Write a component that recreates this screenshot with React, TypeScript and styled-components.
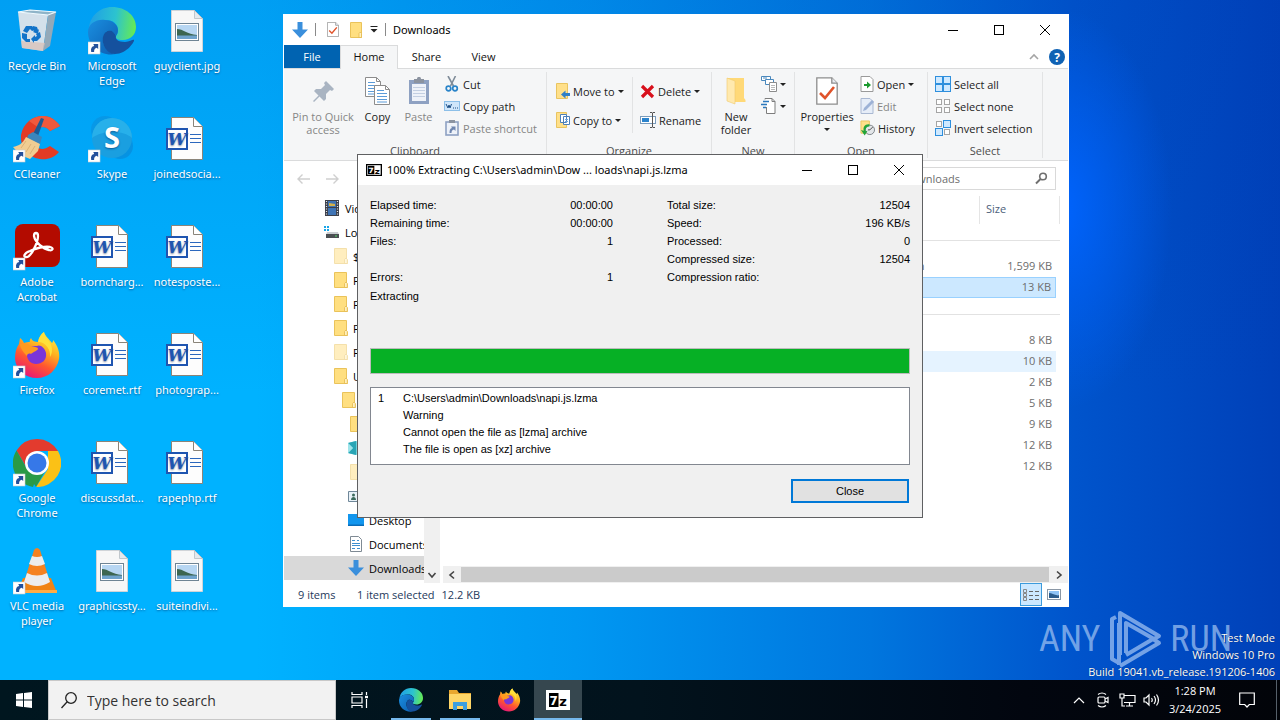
import React from "react";
import styled, { createGlobalStyle, css } from "styled-components";

const ui = `"Open Sans", "Noto Sans", sans-serif`;
const uiWide = `"Noto Sans", "Open Sans", sans-serif`;
const classic = `"Liberation Sans", Arial, sans-serif`;

const Global = createGlobalStyle`
  *, *::before, *::after { box-sizing: border-box; }
  body { margin: 0; font: 11px/15px ${ui}; color: #111; overflow: hidden; }
  button, input { font: inherit; color: inherit; }
  button { border: 0; padding: 0; background: none; }
  ul { list-style: none; margin: 0; padding: 0; }
  svg { display: block; flex: none; }
`;

/* ---------- desktop ---------- */

const Screen = styled.div`
  display: flex;
  flex-direction: column;
  height: 100vh;
  background:
    radial-gradient(ellipse 110px 200px at 83% 29%, rgba(0, 100, 255, 0.95), rgba(0, 90, 240, 0) 100%),
    linear-gradient(180deg, rgba(0, 60, 180, 0.16), rgba(0, 60, 180, 0) 55%),
    linear-gradient(90deg, #00b2ff 0%, #00b2ff 20%, #0098f2 45%, #0076de 68%, #0054cc 84%, #0040b8 100%);
`;
const Desktop = styled.main`
  position: relative;
  flex: 1;
  min-height: 0;
`;
const Shortcuts = styled.ul`
  display: grid;
  grid-auto-flow: column;
  grid-template-rows: repeat(6, 108px);
  grid-auto-columns: 75px;
  width: max-content;
  font-family: ${uiWide};
`;
const Shortcut = styled.button`
  display: flex;
  flex-direction: column;
  align-items: center;
  gap: 3px;
  width: 74px;
  padding-top: 7px;
  color: #fff;
  text-align: center;
  text-shadow: 0 1px 2px rgba(0, 30, 80, 0.55);
`;

/* ---------- windows ---------- */

const Explorer = styled.section`
  position: absolute;
  inset: 14px 211px 73px 283px;
  display: flex;
  flex-direction: column;
  padding: 0 1px;
  background: #fff;
`;
const TitleBar = styled.header<{ $h: number }>`
  display: flex;
  align-items: center;
  flex: none;
  height: ${(p) => p.$h}px;
  padding-left: 8px;
  background: #fff;
`;
const Title = styled.h1`
  flex: 1;
  margin: 0;
  font: 400 11px/16px ${uiWide};
  color: #000;
  white-space: nowrap;
`;
const WinButton = styled.button`
  display: grid;
  place-items: center;
  width: 46px;
  height: 30px;
`;
const QuickBar = styled.div`
  display: flex;
  align-items: center;
  height: 16px;
  margin-right: 7px;
`;
const DialogIcon = styled.span`
  margin-right: 5px;
`;
const QuickButton = styled.button<{ $w: number }>`
  display: grid;
  place-items: center;
  width: ${(p) => p.$w}px;
`;
const QuickRule = styled.span`
  width: 1px;
  height: 13px;
  background: #8a8a8a;
`;
const QuickLead = styled.span`
  padding-right: 7px;
`;

const Tabs = styled.nav`
  display: flex;
  align-items: stretch;
  flex: none;
  height: 24px;
  border-bottom: 1px solid #dadbdc;
`;
const Tab = styled.button<{ $kind?: "file" | "active" }>`
  width: 57px;
  height: 24px;
  padding-bottom: 1px;
  ${(p) => p.$kind === "file" && css`background: #0063b1; color: #fff; height: 23px; width: 56px;`}
  ${(p) => p.$kind === "active" && css`
    width: 58px;
    padding-bottom: 2px;
    background: #f5f6f7;
    border: 1px solid #dadbdc;
    border-bottom: 0;
  `}
`;
const EndTools = styled.div<{ $gap: number }>`
  display: flex;
  align-items: center;
  gap: ${(p) => p.$gap}px;
  margin-left: auto;
  padding-right: 3px;
`;

const Ribbon = styled.div`
  display: flex;
  flex: none;
  height: 92px;
  padding-top: 3px;
  background: #f5f6f7;
  border-bottom: 1px solid #dadbdc;
`;
const Group = styled.section<{ $w: number }>`
  display: flex;
  flex-direction: column;
  width: ${(p) => p.$w}px;
  height: 86px;
  border-right: 1px solid #e2e3e4;
`;
const GroupBody = styled.div`
  display: flex;
  flex: 1;
`;
const GroupName = styled.h2`
  margin: 0;
  font: 400 11px/15px ${ui};
  color: #4c4c4c;
  text-align: center;
`;
const BigButton = styled.button<{ $w: number; $off?: boolean }>`
  display: flex;
  flex-direction: column;
  align-items: center;
  gap: 5px;
  width: ${(p) => p.$w}px;
  padding-top: 5px;
  line-height: 13px;
  color: ${(p) => (p.$off ? "#868686" : "#222")};
`;
const Stack = styled.div<{ $left?: number }>`
  display: flex;
  flex-direction: column;
  padding: 1px 0 0 ${(p) => p.$left ?? 1}px;
`;
const Pair = styled.div<{ $w?: number; $left: number }>`
  display: flex;
  flex-direction: column;
  gap: 7px;
  width: ${(p) => (p.$w ? `${p.$w}px` : "auto")};
  padding: 8px 0 0 ${(p) => p.$left}px;
`;
const SmallButton = styled.button<{ $off?: boolean }>`
  display: flex;
  align-items: center;
  gap: 3px;
  height: 22px;
  white-space: nowrap;
  color: ${(p) => (p.$off ? "#868686" : "#222")};
`;
const InnerRule = styled.span`
  width: 1px;
  height: 56px;
  margin-top: 5px;
  background: #e2e3e4;
`;

const AddressRow = styled.div`
  display: flex;
  align-items: center;
  flex: none;
  height: 35px;
  padding: 0 12px 0 11px;
`;
const NavButton = styled.button`
  display: grid;
  place-items: center;
  width: 16px;
  margin-right: 13px;
`;
const SearchBox = styled.label`
  display: flex;
  align-items: center;
  width: 199px;
  height: 23px;
  margin-left: auto;
  padding: 0 7px;
  border: 1px solid #d9d9d9;
  input {
    flex: 1;
    min-width: 0;
    padding: 0;
    border: 0;
    outline: 0;
    background: none;
  }
  input::placeholder { color: #6d6d6d; opacity: 1; }
`;

const Panes = styled.div`
  display: flex;
  flex: 1;
  min-height: 0;
`;
const Tree = styled.ul`
  width: 140px;
  overflow: hidden;
`;
const TreeRow = styled.li<{ $depth: number; $on?: boolean }>`
  display: flex;
  align-items: center;
  gap: 5px;
  height: 24px;
  padding-left: ${(p) => 32 + p.$depth * 8}px;
  color: #000;
  white-space: nowrap;
  background: ${(p) => (p.$on ? "#d9d9d9" : "none")};
`;
const VScroll = styled.div`
  display: flex;
  align-items: flex-end;
  width: 16px;
  background: #f0f0f0;
`;
const ScrollButton = styled.button`
  display: grid;
  place-items: center;
  width: 16px;
  height: 17px;
`;
const Files = styled.div`
  display: flex;
  flex-direction: column;
  flex: 1;
  min-width: 0;
  padding-left: 3px;
`;
const FileTable = styled.table`
  width: calc(100% - 8px);
  border-collapse: separate;
  border-spacing: 0;
  table-layout: fixed;
  color: #6d6d6d;
  th {
    height: 28px;
    padding: 0 0 3px;
    font-weight: 400;
    text-align: left;
    color: #4c607a;
  }
  th.size { padding-left: 6px; border-left: 1px solid #e5e5e5; }
  th.end { border-right: 1px solid #e5e5e5; }
  td { height: 21px; padding: 0 6px 2px; }
  td.size { padding: 0 4px 2px 0; text-align: right; }
  td.edge { padding: 0; }
  td.group { height: 32px; padding: 0; }
`;
const FileRow = styled.tr<{ $state?: "selected" | "hover" }>`
  ${(p) => p.$state === "selected" && css`
    td:not(.edge) { background: #cce8ff; border: solid #99d1ff; border-width: 1px 0; }
    td.size { border-right: 1px solid #99d1ff; }
  `}
  ${(p) => p.$state === "hover" && css`td:not(.edge) { background: #e5f3ff; }`}
`;
const GroupRule = styled.hr`
  margin: 0;
  border: 0;
  border-top: 1px solid #e2e2e2;
`;
const HScroll = styled.div`
  display: flex;
  height: 17px;
  margin: auto 0 0;
  padding: 0 1px;
  background: #f0f0f0;
`;
const Thumb = styled.span`
  flex: 1;
  height: 15px;
  margin: 1px 2px 0 1px;
  background: #cbcbcb;
`;
const StatusBar = styled.footer`
  display: flex;
  align-items: center;
  flex: none;
  height: 24px;
  padding: 0 4px 1px 14px;
  color: #1e395b;
  white-space: nowrap;
  span { margin-right: 7px; }
  span:first-child { min-width: 52px; }
`;
const ViewButton = styled.button`
  display: grid;
  place-items: center;
  width: 22px;
  height: 23px;
  background: #cce8ff;
  border: 1px solid #3c9bdc;
`;

/* ---------- extraction dialog ---------- */

const Dialog = styled.section`
  position: absolute;
  top: 154px;
  left: 357px;
  right: 357px;
  border: 1px solid #5f6062;
  background: #f0f0f0;
  color: #000;
  font: 11px/18px ${classic};
`;
const DialogBody = styled.div`
  padding: 11px 12px 14px;
`;
const Stats = styled.div`
  display: grid;
  grid-template-columns: 1fr 1fr;
  column-gap: 54px;
`;
const StatList = styled.dl`
  margin: 0;
`;
const Stat = styled.div`
  display: flex;
  justify-content: space-between;
  height: 18px;
  dt, dd { margin: 0; }
`;
const Phase = styled.p`
  margin: 1px 0 43px;
`;
const Progress = styled.div`
  height: 26px;
  border: 1px solid #bcbcbc;
  background: #e6e6e6;
`;
const ProgressFill = styled.div`
  height: 100%;
  background: #06b025;
`;
const Messages = styled.div`
  display: grid;
  grid-template-columns: 25px 1fr;
  align-content: start;
  height: 78px;
  margin: 13px 0 14px;
  padding: 2px 7px;
  border: 1px solid #828790;
  background: #fff;
  line-height: 17px;
  p { margin: 0; }
`;
const CloseButton = styled.button`
  display: block;
  width: 118px;
  height: 24px;
  margin: 0 1px 0 auto;
  border: 2px solid #0078d7;
  background: #e1e1e1;
  line-height: 18px;
`;

/* ---------- watermark ---------- */

const Brand = styled.div`
  position: absolute;
  right: 48px;
  bottom: 11px;
  display: flex;
  align-items: center;
  gap: 8px;
  color: rgba(165, 198, 243, 0.7);
  font: 400 36px/60px "Liberation Sans Narrow", "Roboto Condensed", Roboto, sans-serif;
`;
const BuildInfo = styled.div`
  position: absolute;
  right: 5px;
  bottom: 0;
  color: #fff;
  line-height: 17px;
  text-align: right;
  text-shadow: 0 0 1px rgba(0, 0, 0, 0.6);
`;

/* ---------- taskbar ---------- */

const Taskbar = styled.footer`
  display: flex;
  flex: none;
  height: 40px;
  background: linear-gradient(90deg, #00161f, #02131d 50%, #02060f 80%, #020409);
  color: #fff;
`;
const Pinned = styled.div`
  display: flex;
  gap: 1px;
  margin-left: 3px;
`;
const TaskButton = styled.button<{ $active?: boolean; $open?: boolean }>`
  position: relative;
  display: grid;
  place-items: center;
  width: 48px;
  height: 40px;
  background: ${(p) => (p.$active ? "#36474f" : "none")};
  &::after {
    content: "";
    position: absolute;
    bottom: 0;
    left: ${(p) => (p.$active ? 0 : 4)}px;
    right: ${(p) => (p.$active ? 0 : 4)}px;
    height: 2px;
    background: ${(p) => (p.$active || p.$open ? "#76b9ed" : "none")};
  }
`;
const TaskSearch = styled.label`
  display: flex;
  align-items: center;
  gap: 10px;
  width: 288px;
  padding-left: 12px;
  border: 1px solid #c8c8c8;
  background: #f2f2f2;
  color: #222;
  font-size: 14px;
  input { flex: 1; min-width: 0; height: 20px; padding: 0; border: 0; outline: 0; background: none; }
  input::placeholder { color: #333; opacity: 1; }
`;
const Tray = styled.div`
  display: flex;
  align-items: center;
  margin-left: auto;
`;
const TrayButton = styled.button<{ $w?: number }>`
  display: grid;
  place-items: center;
  width: ${(p) => p.$w ?? 24}px;
  height: 40px;
`;
const Clock = styled.button`
  width: 64px;
  line-height: 18px;
  text-align: center;
`;
const ShowDesktop = styled.button`
  width: 4px;
  height: 40px;
  margin-left: 9px;
  border-left: 1px solid #56606a;
`;

/* ---------- drawings ---------- */

const Badge = () => (
  <g>
    <rect x="0" y="35" width="12" height="12" fill="#fff" stroke="#c9ccd0" strokeWidth=".6" />
    <path d="M3.200 45c-.7-3.600.6-5.600 3-6l-.9-1.900h4.900v5l-1.500-1.400c-1.700.4-2.700 1.600-2.600 4.300z" fill="#24509b" />
  </g>
);
const Big = ({ children, badge }: { children: React.ReactNode; badge?: boolean }) => (
  <svg width="48" height="48" viewBox="0 0 48 48" aria-hidden="true">
    {children}
    {badge && <Badge />}
  </svg>
);

const BinIcon = () => (
  <Big>
    <path d="M5 5l12-2 26 2-8 3z" fill="#8fb4c8" />
    <path d="M5 5l30 3-5 36-21-3z" fill="#d3e0ea" />
    <path d="M35 8l8-3-6 34-7 5z" fill="#93a9b9" />
    <path d="M8 34l24 2-2 8-21-3z" fill="#dcbfb4" opacity=".7" />
    <path d="M5 5l12-2 26 2-8 3z" fill="none" stroke="#f4fafd" strokeWidth="1.200" />
    <g fill="#1273c8">
      <path d="M13 19h6l3 4-3 1-2-2-3 4-4-2z" />
      <path d="M20 19l4 1 1 3 1-1-1 5-5-2 1-1-2-3z" />
      <path d="M23 27l4-2 1 5-4 4h-3v2l-3-4 4-4v2l2-1z" />
      <path d="M9 26l5 1v5h3v3h-4l-4-4z" />
    </g>
  </Big>
);
const EdgeShape = ({ id }: { id: string }) => (
  <>
    <defs>
      <linearGradient id={`${id}a`} x1="0" y1=".4" x2="1" y2=".5">
        <stop offset="0" stopColor="#1f9fe6" /><stop offset=".55" stopColor="#2cc3cf" /><stop offset="1" stopColor="#66eb53" />
      </linearGradient>
      <linearGradient id={`${id}b`} x1="0" y1="0" x2="1" y2="1">
        <stop offset="0" stopColor="#1a8fe0" /><stop offset="1" stopColor="#0c5cb0" />
      </linearGradient>
    </defs>
    <path d="M1 21C2 9 12 0 24 0c14 0 24 9 24 20 0 8-6 13-13 13-6 0-8-2-7-4 1-1 2-3 2-6 0-6-5-10-12-10C9 13 3 16 1 21z" fill={`url(#${id}a)`} />
    <path d="M0 25c0-8 8-13 17-12 8 0 13 5 13 10 0 3-1 4-2 6-2-6-9-8-12-2-4 9 3 19 12 20-15 3-28-8-28-22z" fill={`url(#${id}b)`} />
    <path d="M16 27c3-5 9-5 12 2-1 3 2 6 9 6 5 0 8-3 9-2 1 1-7 14-19 14-9 0-15-12-11-20z" fill="#15519e" />
  </>
);
const CCleanerIcon = () => (
  <Big badge>
    <path d="M47 11L37 16c-3-4-7-5-11-3-6 3-8 10-5 16 3 5 9 7 16 2l9 6c-5 6-12 8-19 7C14 42 7 32 8 20 10 8 20 1 30 1c7 0 13 4 17 10z" fill="#e23b25" />
    <path d="M47 11L37 16c-3-4-7-5-11-3L16 6c5-4 10-5 14-5 7 0 13 4 17 10z" fill="#f0593d" />
    <path d="M28 3l3 1-6 17-5-2z" fill="#1c5a94" />
    <path d="M15 20l5-3 9 5-2 7-13-5z" fill="#3a86bd" />
    <path d="M13 22l14 7-2 7-8 8c-8-3-12-6-17-12 6-1 10-4 13-10z" fill="#f1cd92" />
    <path d="M13 26l-5 7M18 29l-5 8M22 31l-5 8" stroke="#dcb277" fill="none" />
  </Big>
);
const SkypeIcon = () => (
  <Big badge>
    <circle cx="17" cy="15" r="14" fill="#0b8fdc" opacity=".6" />
    <circle cx="32" cy="31" r="13" fill="#0a86d4" opacity=".6" />
    <circle cx="24" cy="23" r="20" fill="#1a9fe0" />
    <path d="M4 23a20 20 0 0 1 40 0c-8-8-30-8-40 0z" fill="#27b0ea" />
    <text x="24" y="33" textAnchor="middle" fontFamily="Open Sans" fontWeight="700" fontSize="29" fill="#fff">S</text>
  </Big>
);
const AcrobatIcon = () => (
  <Big badge>
    <rect x="2" y="1" width="45" height="43" rx="8" fill="#b30b00" />
    <path d="M13 34c-3 0-2-4 4-6 6-3 15-5 20-4 4 1 3 4-1 3-6-1-14-8-15-14 0-4 4-4 4 0 0 6-7 22-12 21z" fill="none" stroke="#fff" strokeWidth="2.300" strokeLinejoin="round" />
  </Big>
);
const FoxShape = ({ id }: { id: string }) => (
  <>
    <defs>
      <linearGradient id={id} x1=".8" y1="0" x2=".3" y2="1">
        <stop offset="0" stopColor="#fff04a" /><stop offset=".35" stopColor="#ffb31f" /><stop offset=".65" stopColor="#ff5630" /><stop offset="1" stopColor="#e6157a" />
      </linearGradient>
    </defs>
    <path d="M31 1c1 4 5 7 8 11 1-1 1-2 1-3 5 6 7 13 6 19-2 11-11 19-22 19C12 47 3 39 2 28c0-6 1-11 4-15l1-6c2 1 3 3 4 5 2-1 4-1 6-1-1-1 0-2 1-4 1 3 4 4 7 4 1-5 3-8 6-10z" fill={`url(#${id})`} />
    <path d="M14 21c1-4 5-6 10-6 3-2 8 2 9 7 1 7-4 11-10 11-5 0-9-4-9-9z" fill="#7a35d8" />
    <path d="M7 13c5-1 9 0 12 3 3 0 6 0 6 2-1 2-5 3-7 5-2-1-4 0-4 2-3-3-7-8-7-12z" fill="#ff9a1f" />
    <path d="M25 11c8 0 13 8 12 15 3-4 3-12-2-17-3-3-4-5-4-8-3 2-5 5-6 10z" fill="#ffe03a" />
  </>
);
const ChromeIcon = () => (
  <Big badge>
    <path d="M24 0a24 24 0 0 1 21 12H24L14 29.500 3.500 11.500A24 24 0 0 1 24 0z" fill="#e33b2e" />
    <path d="M3.500 11.500L14 30l10 6-4 12A24 24 0 0 1 3.500 11.500z" fill="#2a9a47" />
    <path d="M45 12A24 24 0 0 1 23 48l12-18 0-18z" fill="#fbc116" />
    <path d="M23 48L14 34l18-2z" fill="#2a9a47" />
    <circle cx="24" cy="24" r="12" fill="#fff" />
    <circle cx="24" cy="24" r="9.500" fill="#3678e8" />
  </Big>
);
const VlcIcon = () => (
  <Big badge>
    <path d="M10 31h28l6 15H4z" fill="#f08314" />
    <path d="M4 43h40v3H4z" fill="#ffac45" />
    <path d="M21 3q3-4 6 0l10 32q-13 8-26 0z" fill="#f58220" />
    <path d="M19 9q5 2 10 0l3 8q-8 4-16 0z" fill="#ededed" />
    <path d="M14 26q10 5 20 0l3 9q-13 8-26 0z" fill="#ededed" />
  </Big>
);
const WordDocIcon = () => (
  <Big>
    <path d="M8.500 2.500h22l9 9v33h-31z" fill="#fdfdfd" stroke="#8a8479" />
    <path d="M30.500 2.500v9h9" fill="#fff" stroke="#8a8479" />
    <path d="M27 19.500h11M27 23.500h11M27 27.500h11" stroke="#2b67bd" />
    <rect x="3" y="13" width="22" height="22" fill="#1f55b0" />
    <rect x="5" y="15" width="18" height="18" fill="#fff" />
    <text x="14" y="30" textAnchor="middle" fontFamily="DejaVu Serif, serif" fontStyle="italic" fontWeight="700" fontSize="17" fill="#1f55b0">W</text>
  </Big>
);
const PictureDocIcon = () => (
  <Big>
    <path d="M8.500 3.500h23l8 8v33h-31z" fill="#f7f7f7" stroke="#d0d4d8" />
    <path d="M31.500 3.500v8h8z" fill="#e3e9ee" stroke="#b5bcc2" strokeWidth=".8" />
    <rect x="12.500" y="16.500" width="23" height="17" fill="#fff" stroke="#6f8494" />
    <rect x="14" y="18" width="20" height="14" fill="#b7d6f2" />
    <path d="M14 22c6 0 10 5 20 6v1H14z" fill="#3d6650" />
    <path d="M14 28.500h20V32H14z" fill="#6fa3cc" />
  </Big>
);

const DownArrow = () => (
  <svg width="16" height="16" viewBox="0 0 16 16"><path d="M5.500 0h5v7.500H16L8 16 0 7.500h5.500z" fill="#3a8fdc" /></svg>
);
const Caret = () => (
  <svg width="6" height="3" viewBox="0 0 6 3"><path d="M0 0h6L3 3z" fill="#222" /></svg>
);
const FolderIcon = ({ faded, w = 16, h = 16 }: { faded?: boolean; w?: number; h?: number }) => (
  <svg width={w} height={h} viewBox="0 0 16 16" opacity={faded ? 0.5 : 1}>
    <path d="M2.500.5H14.500V11l.8 1v3.500H2.500z" fill="#ffdf80" stroke="#eac35a" />
    <path d="M12.500 15.500v-4l1.500-1.500 1.300 1.500v4z" fill="#fff0bd" stroke="#e5b94b" strokeWidth=".8" />
  </svg>
);
const QuickFolder = () => (
  <svg width="12" height="16" viewBox="0 0 12 16"><path d="M.5.500h11v15H.5z" fill="#ffdf80" stroke="#eac35a" /><path d="M9 15.500v-4l1.300-1.500 1.200 1.500v4z" fill="#fff0bd" stroke="#e5b94b" strokeWidth=".8" /></svg>
);
const CheckDoc = ({ w, h }: { w: number; h: number }) => (
  <svg width={w} height={h} viewBox="0 0 22 28" preserveAspectRatio="none">
    <path d="M.8.800h15l5.400 5.400v21H.8z" fill="#fff" stroke="#8d8d8d" strokeWidth="1.300" />
    <path d="M15.800.8v5.400h5.400" fill="#e9edf2" stroke="#8d8d8d" strokeWidth="1.300" />
    <path d="M4 16l5 5 9-11" fill="none" stroke="#e0532a" strokeWidth="2.600" />
  </svg>
);
const Minimize = () => <svg width="10" height="10"><path d="M0 5.500h10" stroke="#000" /></svg>;
const Maximize = () => <svg width="10" height="10"><rect x=".5" y=".5" width="9" height="9" fill="none" stroke="#000" /></svg>;
const Cross = () => <svg width="10" height="10"><path d="M0 0l10 10M10 0L0 10" stroke="#000" /></svg>;

const PinIcon = () => (
  <svg width="28" height="28" viewBox="0 0 28 28">
    <path d="M17 4l8 8-2 2-2-1-4 4v5l-2 2-4.500-4.500L5 25l-1-1 5.500-5.500L5 14l2-2h5l4-4-1-2z" fill="#a9b4c2" />
  </svg>
);
const Sheet = ({ x, y }: { x: number; y: number }) => (
  <g transform={`translate(${x} ${y})`}>
    <path d="M.5.500h11l4 4v15H.5z" fill="#fff" stroke="#8c8c8c" />
    <path d="M11.500.5v4h4" fill="none" stroke="#8c8c8c" />
    <path d="M3 5.500h7M3 8.500h10M3 11.500h10M3 14.500h10M3 17h10" stroke="#5b9bd8" />
  </g>
);
const CopyBig = () => (
  <svg width="25" height="28" viewBox="0 0 25 28"><Sheet x={0} y={0} /><Sheet x={9} y={8} /></svg>
);
const PasteBig = () => (
  <svg width="22" height="28" viewBox="0 0 22 28">
    <rect x="1" y="3" width="20" height="24" fill="#8ea1c2" />
    <rect x="4" y="7" width="14" height="17" fill="#eef2f9" />
    <path d="M5 10.500h12M5 13.500h12M5 16.500h12M5 19.500h12" stroke="#c3cfe2" />
    <path d="M6 2h3c0-3 4-3 4 0h3v4H6z" fill="#8b93a0" />
  </svg>
);
const CutIcon = () => (
  <svg width="16" height="16" viewBox="0 0 16 16" fill="none">
    <path d="M4 0l5.500 10M11.500 0L6.500 10" stroke="#7f8c99" strokeWidth="1.600" />
    <circle cx="4.500" cy="12.500" r="2.300" stroke="#2a84c9" strokeWidth="1.700" /><circle cx="11" cy="12.500" r="2.300" stroke="#2a84c9" strokeWidth="1.700" />
  </svg>
);
const PathIcon = () => (
  <svg width="16" height="16" viewBox="0 0 16 16">
    <rect x=".5" y="3.500" width="15" height="9" fill="#cfe6fa" stroke="#8cbfe8" />
    <path d="M2 6l2 4 1-3 1 3 1.500-4M9 10h1M11 10h1M13 10h1" fill="none" stroke="#1d4f86" />
  </svg>
);
const PasteLinkIcon = () => (
  <svg width="16" height="16" viewBox="0 0 16 16">
    <rect x="2" y="2" width="12" height="13" fill="#eef2f9" stroke="#8ea1c2" strokeWidth="1.600" />
    <path d="M5 0h6v3H5z" fill="#8b93a0" />
    <path d="M5.500 13c0-3 .5-4.500 2.500-5L7 6.500h4.500V11L10 9.500c-2 .5-2.500 1.500-2.500 3.500z" fill="#6f86b0" />
  </svg>
);
const MoveIcon = () => (
  <svg width="14" height="16" viewBox="0 0 14 16">
    <path d="M.5.500h11v15H.5z" fill="#ffe08a" stroke="#e9c460" />
    <path d="M14 10v3H9.500v2.500L5 11.500l4.500-4V10z" fill="#2f7fc8" />
  </svg>
);
const CopyToIcon = () => (
  <svg width="14" height="16" viewBox="0 0 14 16">
    <path d="M.5.500h10v15H.5z" fill="#ffe08a" stroke="#e9c460" />
    <path d="M4.500 2.500h6v8h-6zM7.500 4.500h6v8h-6z" fill="#fff" stroke="#4d7fb8" />
    <path d="M9 7.500h3M9 9.500h3" stroke="#6ba3dc" />
  </svg>
);
const DeleteIcon = () => (
  <svg width="15" height="15" viewBox="0 0 15 15"><path d="M2 2l11 11M13 2L2 13" stroke="#d8101c" strokeWidth="3.200" /></svg>
);
const RenameIcon = () => (
  <svg width="16" height="16" viewBox="0 0 16 16" fill="none">
    <rect x=".5" y="4.500" width="15" height="7" fill="#fff" stroke="#7a9cbc" /><path d="M2 6h7v4H2z" fill="#2b83cc" />
    <path d="M10 .5h2l.5.500.5-.500h2M12.500 1v14M10 15.500h2l.5-.500.5.500h2" stroke="#555" />
  </svg>
);
const NewFolderBig = () => (
  <svg width="20" height="28" viewBox="0 0 20 28">
    <path d="M1 1h17v20l1.500 2v2H8z" fill="#ffd978" />
    <path d="M1 1l8 3v23l-8-3z" fill="#ffe9ae" stroke="#f0cb6c" strokeWidth=".6" />
  </svg>
);
const NewItemIcon = () => (
  <svg width="16" height="16" viewBox="0 0 16 16" fill="#fff">
    <path d="M.5.500h9v4h-9z" stroke="#4a88bd" /><path d="M2 2h4" stroke="#4a88bd" /><path d="M4.500 3.500h8v5h-8z" stroke="#4a88bd" />
    <path d="M8.500 6.500h7v9h-7z" stroke="#8c8c8c" /><path d="M10 9.500h4M10 11.500h4M10 13.500h4" stroke="#b9b9b9" />
  </svg>
);
const EasyAccessIcon = () => (
  <svg width="16" height="16" viewBox="0 0 16 16" fill="none">
    <path d="M4 1.500V.5h7l3 3v12H5.500V9" fill="#fff" stroke="#7d7d7d" /><path d="M11 .5v3h3" stroke="#7d7d7d" />
    <path d="M2 3.500h6M0 6.500h6M2 9.500h3" stroke="#2b78bd" strokeWidth="1.300" />
  </svg>
);
const OpenDocIcon = () => (
  <svg width="14" height="16" viewBox="0 0 14 16">
    <path d="M1 .500h9l3 3v12H1z" fill="#fff" stroke="#9a9a9a" /><path d="M4 8h3V5.500L11 9l-4 3.500V10H4z" fill="#1c9a2f" />
  </svg>
);
const EditDocIcon = () => (
  <svg width="14" height="16" viewBox="0 0 14 16">
    <path d="M1 .500h9l3 3v12H1z" fill="#e6edf8" stroke="#a9b8d2" /><path d="M3 13l1-3 8-8 2 2-8 8z" fill="#9db2d6" />
  </svg>
);
const HistoryIcon = () => (
  <svg width="15" height="16" viewBox="0 0 16 16">
    <path d="M1 .500h9v13H1z" fill="#ffe08a" stroke="#e9c460" />
    <circle cx="10.500" cy="10" r="5" fill="#e3e6e9" stroke="#7b8186" /><path d="M10.500 10l3-3M10.500 10h-2" stroke="#444" />
    <path d="M10 4c-5-.5-7 3-6 7l-3-1 4 6 3-5-2 .5c-.5-3 1-5 4-5z" fill="#23a53a" />
  </svg>
);
const Tiles = ({ on }: { on: number[] }) => (
  <svg width="16" height="16" viewBox="0 0 16 16">
    {[0, 1, 2, 3].map((i) => {
      const hit = on.includes(i);
      return (
        <rect key={i} x={(i % 2) * 8 + (hit ? 0.5 : 1.5)} y={(i >> 1) * 8 + (hit ? 0.5 : 1.5)} width={hit ? 7 : 5} height={hit ? 7 : 5}
          fill={hit ? "#cfe9ff" : "#fff"} stroke={hit ? "#2e8fdd" : "#a5a5a5"} />
      );
    })}
  </svg>
);
const Chevron = ({ d, color = "#444", w = 1.6 }: { d: string; color?: string; w?: number }) => (
  <svg width="10" height="10" viewBox="0 0 10 10"><path d={d} fill="none" stroke={color} strokeWidth={w} /></svg>
);
const ArrowIcon = ({ flip }: { flip?: boolean }) => (
  <svg width="13" height="12" viewBox="0 0 13 12">
    <path d={flip ? "M0 6h12M7.500 1.500L12 6l-4.500 4.500" : "M13 6H1M5.500 1.500L1 6l4.500 4.500"} fill="none" stroke="#cfcfcf" strokeWidth="1.400" />
  </svg>
);
const Loupe = () => (
  <svg width="13" height="13" viewBox="0 0 13 13" fill="none" stroke="#6f6f6f">
    <circle cx="8" cy="4.500" r="3.300" strokeWidth="1.600" /><path d="M5.500 7L1 11.500" strokeWidth="2" />
  </svg>
);
const FilmIcon = () => (
  <svg width="16" height="16" viewBox="0 0 16 16">
    <path d="M1 0h14v16H1z" fill="#3b3f4a" /><path d="M4 1h8v6H4zM4 8h8v7H4z" fill="#3f74b5" /><path d="M5 3l6 1v2H5z" fill="#d5b14a" />
    <path d="M2.500 1v15M13.500 1v15" stroke="#e8e8e8" strokeWidth="1.200" strokeDasharray="1 1.500" />
  </svg>
);
const DriveIcon = () => (
  <svg width="16" height="16" viewBox="0 0 16 16">
    <path d="M0 2h2v2H0zM3 2h2v2H3zM0 5h2v2H0zM3 5h2v2H3z" fill="#18a5e8" />
    <path d="M3 8h11l1 3H2z" fill="#c9cdd0" /><path d="M2 10h13v4H2z" fill="#4b4f52" /><path d="M11 12h2" stroke="#56e06a" />
  </svg>
);
const CubeIcon = () => (
  <svg width="16" height="16" viewBox="0 0 16 16"><path d="M0 3l8-2 8 2v10l-8 2-8-2z" fill="#6fd3dc" /><path d="M0 3l8-2v14l-8-2 5-5z" fill="#2aa5b5" /><path d="M0 13l5-5-5-5z" fill="#9fe4ea" /></svg>
);
const ContactIcon = () => (
  <svg width="16" height="16" viewBox="0 0 16 16"><path d="M.5 3.500h15v10H.5z" fill="#e8f1f7" stroke="#6f8799" /><circle cx="5.500" cy="7" r="1.500" fill="#3c6a5c" /><path d="M3 12c0-4 5-4 5 0z" fill="#3c6a5c" /></svg>
);
const DesktopIcon = () => (
  <svg width="16" height="16" viewBox="0 0 16 16"><path d="M0 2h16v12H0z" fill="#1296ee" /><path d="M0 12.500h16V14H0z" fill="#0a6cb8" /></svg>
);
const DocumentIcon = () => (
  <svg width="16" height="16" viewBox="0 0 16 16"><path d="M2.500.500h8l3 3v12h-11z" fill="#fff" stroke="#7f8a94" /><path d="M4 4.500h3M4 7.500h8M4 9.500h8M4 12.500h3M9 4.500h2M9 12.500h3" stroke="#3f8fcf" /></svg>
);

const SevenZip = ({ w, h, frame }: { w: number; h: number; frame: string }) => (
  <svg width={w} height={h} viewBox="0 0 24 20" preserveAspectRatio="none">
    <rect width="24" height="20" fill={frame} /><rect x="2" y="2" width="20" height="16" fill="#fff" /><rect x="3" y="3" width="9.500" height="14" fill="#000" />
    <text x="7.700" y="15" textAnchor="middle" fontFamily="DejaVu Sans" fontWeight="700" fontSize="12" fill="#fff">7</text>
    <text x="17" y="16" textAnchor="middle" fontFamily="DejaVu Sans" fontWeight="700" fontSize="13" fill="#000">z</text>
  </svg>
);
const FolderTask = () => (
  <svg width="22" height="20" viewBox="0 0 22 20">
    <path d="M0 0h8l2 3h12v15H0z" fill="#e9a72e" /><path d="M0 4h22v15H0z" fill="#ffd667" /><path d="M4 20v-8h14v8h-4v-4H8v4z" fill="#3c9fe0" />
  </svg>
);
const line = { fill: "none", stroke: "#fff", strokeWidth: 1.2 };

/* ---------- data ---------- */

const shortcuts: [string, React.ReactNode][] = [
  ["Recycle Bin", <BinIcon />],
  ["CCleaner", <CCleanerIcon />],
  ["Adobe Acrobat", <AcrobatIcon />],
  ["Firefox", <Big badge><FoxShape id="fox-desktop" /></Big>],
  ["Google Chrome", <ChromeIcon />],
  ["VLC media player", <VlcIcon />],
  ["Microsoft Edge", <Big badge><EdgeShape id="edge-desktop" /></Big>],
  ["Skype", <SkypeIcon />],
  ["borncharg...", <WordDocIcon />],
  ["coremet.rtf", <WordDocIcon />],
  ["discussdat...", <WordDocIcon />],
  ["graphicssty...", <PictureDocIcon />],
  ["guyclient.jpg", <PictureDocIcon />],
  ["joinedsocia...", <WordDocIcon />],
  ["notesposte...", <WordDocIcon />],
  ["photograp...", <WordDocIcon />],
  ["rapephp.rtf", <WordDocIcon />],
  ["suiteindivi...", <PictureDocIcon />],
];

const tree: [number, string, React.ReactNode][] = [
  [1, "Videos", <FilmIcon />],
  [1, "Local Disk (C:)", <DriveIcon />],
  [2, "$Recycle.Bin", <FolderIcon faded />],
  [2, "PerfLogs", <FolderIcon />],
  [2, "Program Files", <FolderIcon />],
  [2, "Program Files (x86)", <FolderIcon />],
  [2, "ProgramData", <FolderIcon faded />],
  [2, "Users", <FolderIcon />],
  [3, "admin", <FolderIcon />],
  [4, ".ms-ad", <FolderIcon />],
  [4, "3D Objects", <CubeIcon />],
  [4, "AppData", <FolderIcon faded />],
  [4, "Contacts", <ContactIcon />],
  [4, "Desktop", <DesktopIcon />],
  [4, "Documents", <DocumentIcon />],
  [4, "Downloads", <DownArrow />],
];

type FileEntry = [string, string, ("selected" | "hover")?];
const recent: FileEntry[] = [
  ["Application", "1,599 KB"],
  ["", "13 KB", "selected"],
];
const older: FileEntry[] = [
  ["", "8 KB"],
  ["", "10 KB", "hover"],
  ["", "2 KB"],
  ["", "5 KB"],
  ["", "9 KB"],
  ["", "12 KB"],
  ["", "12 KB"],
];

const statsLeft = [["Elapsed time:", "00:00:00"], ["Remaining time:", "00:00:00"], ["Files:", "1"], ["", ""], ["Errors:", "1"]];
const statsRight = [["Total size:", "12504"], ["Speed:", "196 KB/s"], ["Processed:", "0"], ["Compressed size:", "12504"], ["Compression ratio:", ""]];
const messages = ["C:\\Users\\admin\\Downloads\\napi.js.lzma", "Warning", "Cannot open the file as [lzma] archive", "The file is open as [xz] archive"];

const WindowControls = () => (
  <>
    <WinButton aria-label="Minimize"><Minimize /></WinButton>
    <WinButton aria-label="Maximize"><Maximize /></WinButton>
    <WinButton aria-label="Close window"><Cross /></WinButton>
  </>
);

const FileRows = ({ rows }: { rows: FileEntry[] }) => (
  <>
    {rows.map(([kind, size, state], i) => (
      <FileRow key={i} $state={state}>
        <td />
        <td>{kind}</td>
        <td className="size">{size}</td>
        <td className="edge" />
      </FileRow>
    ))}
  </>
);

const ExplorerWindow = () => (
  <Explorer aria-label="Downloads">
    <TitleBar $h={31}>
      <QuickBar>
        <QuickLead><DownArrow /></QuickLead>
        <QuickRule />
        <QuickButton $w={34} aria-label="Properties"><CheckDoc w={12} h={15} /></QuickButton>
        <QuickButton $w={12} aria-label="New folder"><QuickFolder /></QuickButton>
        <QuickButton $w={23} aria-label="Customize toolbar">
          <svg width="8" height="7" viewBox="0 0 8 7"><path d="M.5.500h7" stroke="#222" /><path d="M.5 3h7L4 6.500z" fill="#222" /></svg>
        </QuickButton>
        <QuickRule />
      </QuickBar>
      <Title>Downloads</Title>
      <WindowControls />
    </TitleBar>
    <Tabs>
      <Tab $kind="file">File</Tab>
      <Tab $kind="active">Home</Tab>
      <Tab>Share</Tab>
      <Tab>View</Tab>
      <EndTools $gap={10}>
        <button aria-label="Collapse ribbon"><Chevron d="M1 7l4-4 4 4" color="#a5a5a5" /></button>
        <button aria-label="Help">
          <svg width="16" height="16" viewBox="0 0 16 16"><circle cx="8" cy="8" r="8" fill="#0f62b4" /><text x="8" y="12.500" textAnchor="middle" fontFamily="Open Sans" fontWeight="700" fontSize="12" fill="#fff">?</text></svg>
        </button>
      </EndTools>
    </Tabs>
    <Ribbon>
      <Group $w={263}>
        <GroupBody>
          <BigButton $w={78} $off><PinIcon />Pin to Quick<br />access</BigButton>
          <BigButton $w={31}><CopyBig />Copy</BigButton>
          <BigButton $w={51} $off><PasteBig />Paste</BigButton>
          <Stack $left={0}>
            <SmallButton><CutIcon />Cut</SmallButton>
            <SmallButton><PathIcon />Copy path</SmallButton>
            <SmallButton $off><PasteLinkIcon />Paste shortcut</SmallButton>
          </Stack>
        </GroupBody>
        <GroupName>Clipboard</GroupName>
      </Group>
      <Group $w={165}>
        <GroupBody>
          <Pair $w={85} $left={9}>
            <SmallButton><MoveIcon />Move to <Caret /></SmallButton>
            <SmallButton><CopyToIcon />Copy to <Caret /></SmallButton>
          </Pair>
          <InnerRule />
          <Pair $left={7}>
            <SmallButton><DeleteIcon />Delete <Caret /></SmallButton>
            <SmallButton><RenameIcon />Rename</SmallButton>
          </Pair>
        </GroupBody>
        <GroupName>Organize</GroupName>
      </Group>
      <Group $w={83}>
        <GroupBody>
          <BigButton $w={48}><NewFolderBig />New<br />folder</BigButton>
          <Stack>
            <SmallButton aria-label="New item"><NewItemIcon /><Caret /></SmallButton>
            <SmallButton aria-label="Easy access"><EasyAccessIcon /><Caret /></SmallButton>
          </Stack>
        </GroupBody>
        <GroupName>New</GroupName>
      </Group>
      <Group $w={133}>
        <GroupBody>
          <BigButton $w={64}><CheckDoc w={22} h={28} />Properties<Caret /></BigButton>
          <Stack>
            <SmallButton><OpenDocIcon />Open <Caret /></SmallButton>
            <SmallButton $off><EditDocIcon />Edit</SmallButton>
            <SmallButton><HistoryIcon />History</SmallButton>
          </Stack>
        </GroupBody>
        <GroupName>Open</GroupName>
      </Group>
      <Group $w={115}>
        <GroupBody>
          <Stack $left={7}>
            <SmallButton><Tiles on={[0, 1, 2, 3]} />Select all</SmallButton>
            <SmallButton><Tiles on={[]} />Select none</SmallButton>
            <SmallButton><Tiles on={[1, 2]} />Invert selection</SmallButton>
          </Stack>
        </GroupBody>
        <GroupName>Select</GroupName>
      </Group>
    </Ribbon>
    <AddressRow>
      <NavButton aria-label="Back"><ArrowIcon /></NavButton>
      <NavButton aria-label="Forward"><ArrowIcon flip /></NavButton>
      <NavButton aria-label="Recent locations"><Chevron d="M2 4l3 3 3-3" color="#cfcfcf" /></NavButton>
      <SearchBox>
        <input aria-label="Search Downloads" placeholder="Search Downloads" />
        <Loupe />
      </SearchBox>
    </AddressRow>
    <Panes>
      <Tree>
        {tree.map(([depth, name, icon]) => (
          <TreeRow key={name} $depth={depth} $on={name === "Downloads"}>{icon}{name}</TreeRow>
        ))}
      </Tree>
      <VScroll><ScrollButton aria-label="Scroll down"><Chevron d="M1.500 3l3.500 4 3.500-4" /></ScrollButton></VScroll>
      <Files>
        <FileTable>
          <colgroup><col /><col width="118" /><col width="77" /><col width="4" /></colgroup>
          <thead><tr><th /><th /><th className="size" scope="col">Size</th><th className="end" /></tr></thead>
          <tbody>
            <tr><td className="group" colSpan={4}><GroupRule /></td></tr>
            <FileRows rows={recent} />
            <tr><td className="group" colSpan={4}><GroupRule /></td></tr>
            <FileRows rows={older} />
          </tbody>
        </FileTable>
        <HScroll>
          <ScrollButton aria-label="Scroll left"><Chevron d="M7 1.500L3 5l4 3.500" /></ScrollButton>
          <Thumb />
          <ScrollButton aria-label="Scroll right"><Chevron d="M3 1.500L7 5 3 8.500" /></ScrollButton>
        </HScroll>
      </Files>
    </Panes>
    <StatusBar>
      <span>9 items</span><span>1 item selected</span><span>12.2 KB</span>
      <EndTools $gap={5}>
        <ViewButton aria-label="Details view">
          <svg width="16" height="12" fill="none"><path d="M.5.500h3v3h-3zM.5 4.500h3v3h-3zM.5 8.500h3v3h-3z" stroke="#888" /><path d="M6 2.500h4M12 2.500h4M6 6.500h4M12 6.500h4M6 10.500h4M12 10.500h4" stroke="#666" /></svg>
        </ViewButton>
        <button aria-label="Large icons view">
          <svg width="14" height="11"><rect x=".5" y=".5" width="13" height="10" fill="#fff" stroke="#8a97a5" /><path d="M2 2h10v4H2z" fill="#8fc3f5" /><path d="M2 4c3 0 6 3 10 2v3H2z" fill="#2c5c8c" /></svg>
        </button>
      </EndTools>
    </StatusBar>
  </Explorer>
);

const StatColumn = ({ items }: { items: string[][] }) => (
  <StatList>
    {items.map(([k, v], i) => <Stat key={i}><dt>{k}</dt><dd>{v}</dd></Stat>)}
  </StatList>
);

const ExtractDialog = () => (
  <Dialog role="dialog" aria-label="Extracting">
    <TitleBar $h={30}>
      <DialogIcon><SevenZip w={16} h={12} frame="#000" /></DialogIcon>
      <Title>100% Extracting C:\Users\admin\Dow ... loads\napi.js.lzma</Title>
      <WindowControls />
    </TitleBar>
    <DialogBody>
      <Stats><StatColumn items={statsLeft} /><StatColumn items={statsRight} /></Stats>
      <Phase>Extracting</Phase>
      <Progress role="progressbar" aria-valuenow={100}><ProgressFill style={{ width: "100%" }} /></Progress>
      <Messages><span>1</span><div>{messages.map((m) => <p key={m}>{m}</p>)}</div></Messages>
      <CloseButton>Close</CloseButton>
    </DialogBody>
  </Dialog>
);

export default function App() {
  return (
    <Screen>
      <Global />
      <Desktop>
        <Shortcuts>
          {shortcuts.map(([name, icon]) => <li key={name}><Shortcut>{icon}<span>{name}</span></Shortcut></li>)}
        </Shortcuts>
        <Brand>
          ANY
          <svg width="54" height="60" viewBox="0 0 54 60" fill="none" stroke="currentColor" strokeWidth="4" strokeLinejoin="round">
            <path d="M8 8L4 10v40l7 4M11 56V14M12 46V4l39 23-5 3L18 14v30M12 57l39-23-6-4-27 16" />
          </svg>
          RUN
        </Brand>
        <ExplorerWindow />
        <ExtractDialog />
        <BuildInfo>Test Mode<br />Windows 10 Pro<br />Build 19041.vb_release.191206-1406</BuildInfo>
      </Desktop>
      <Taskbar>
        <TaskButton aria-label="Start">
          <svg width="16" height="16" viewBox="0 0 16 16"><path d="M0 2l7-1v6.500H0zM8 1l8-1v7.500H8zM0 8.500h7V15l-7-1zM8 8.500h8V16l-8-1z" fill="#fff" /></svg>
        </TaskButton>
        <TaskSearch>
          <svg width="16" height="17" viewBox="0 0 16 17" fill="none" stroke="#222" strokeWidth="1.300"><circle cx="10" cy="6" r="5.300" /><path d="M6.200 9.800L.5 16" /></svg>
          <input aria-label="Type here to search" placeholder="Type here to search" />
        </TaskSearch>
        <TaskButton aria-label="Task view">
          <svg width="18" height="16" viewBox="0 0 18 16" {...line}><path d="M1 0v2.500h10V0M1 5h10v6H1zM1 16v-2.500h10V16M15.500 0v3M15.500 7v9" /><path d="M14 5h3" strokeWidth="2.400" /></svg>
        </TaskButton>
        <Pinned>
          <TaskButton $open aria-label="Microsoft Edge"><svg width="24" height="24" viewBox="0 0 48 48"><EdgeShape id="edge-task" /></svg></TaskButton>
          <TaskButton $open aria-label="File Explorer"><FolderTask /></TaskButton>
          <TaskButton aria-label="Firefox"><svg width="24" height="24" viewBox="0 0 48 48"><FoxShape id="fox-task" /></svg></TaskButton>
          <TaskButton $active aria-label="7-Zip"><SevenZip w={24} h={20} frame="#fff" /></TaskButton>
        </Pinned>
        <Tray>
          <TrayButton aria-label="Show hidden icons"><svg width="12" height="8" {...line}><path d="M1 7l5-5 5 5" /></svg></TrayButton>
          <TrayButton aria-label="Meet now">
            <svg width="14" height="16" viewBox="0 0 14 16" {...line}><rect x="2" y="5" width="7" height="6" rx="1" /><path d="M9 7l3-1.500v5L9 9M2 2.500q4-3 8 0M2 13.500q4 3 8 0" /></svg>
          </TrayButton>
          <TrayButton aria-label="Network">
            <svg width="17" height="14" viewBox="0 0 17 14" {...line}><path d="M5 2.500h11v7H5M10.500 9.500V13M7 13h7M1 1h4v4H1zM3 5v8h3" /></svg>
          </TrayButton>
          <TrayButton aria-label="Volume">
            <svg width="17" height="14" viewBox="0 0 17 14" {...line}><path d="M1 5h2l3-3v10L3 9H1zM8.500 5q1.500 2 0 4M11 3q3 4 0 8M13.500 1.500q4 5.500 0 11" /></svg>
          </TrayButton>
          <Clock>1:28 PM<br />3/24/2025</Clock>
          <TrayButton $w={40} aria-label="Notifications">
            <svg width="16" height="16" viewBox="0 0 16 16" {...line}><path d="M.7 1h14.600v11.500h-5L8 15l-2.300-2.500h-5z" /></svg>
          </TrayButton>
          <ShowDesktop aria-label="Show desktop" />
        </Tray>
      </Taskbar>
    </Screen>
  );
}
